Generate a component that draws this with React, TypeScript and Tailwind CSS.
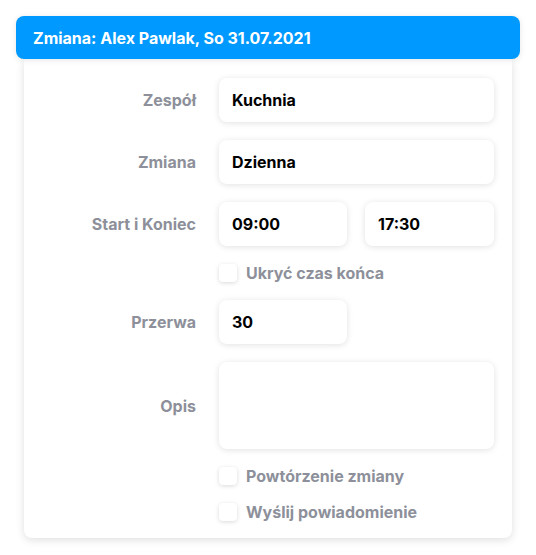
const inputCls =
  "flex h-[44px] items-center rounded-lg bg-white px-[13px] text-[16px] font-bold text-black shadow-[0_1px_6px_rgba(0,0,0,0.12)]";

function Field({ label, children }: { label: string; children: React.ReactNode }) {
  return (
    <div className="flex items-center">
      <div className="w-[172px] shrink-0 text-right text-[16px] font-bold text-[#8d909a]">{label}</div>
      <div className="ml-[23px] flex flex-1 gap-[18px]">{children}</div>
    </div>
  );
}

function Check({ label }: { label: string }) {
  return (
    <div className="flex h-[18px] items-center">
      <div className="w-[172px] shrink-0" />
      <div className="ml-[23px] flex items-center gap-[9px]">
        <span className="h-[18px] w-[18px] rounded-[4px] bg-white shadow-[0_1px_4px_rgba(0,0,0,0.15)]" />
        <span className="text-[16px] font-bold leading-none text-[#8d909a]">{label}</span>
      </div>
    </div>
  );
}

export default function App() {
  return (
    <div
      className="min-h-[555px] bg-white px-[16px] pt-[16px]"
      style={{ fontFamily: "Inter, 'Noto Sans', sans-serif" }}
    >
      <div className="relative z-10 flex h-[43px] items-center rounded-lg bg-[#0099ff] pl-[17px] text-[16px] font-bold text-white shadow-[0_1px_6px_rgba(0,0,0,0.1)]">
        Zmiana: Alex Pawlak, So 31.07.2021
      </div>
      <div className="mx-[8px] flex flex-col gap-[18px] rounded-b-lg bg-white pb-[17px] pr-[18px] pt-[19px] shadow-[0_2px_8px_rgba(0,0,0,0.13)]">
        <Field label="Zespół">
          <div className={`${inputCls} flex-1`}>Kuchnia</div>
        </Field>
        <Field label="Zmiana">
          <div className={`${inputCls} flex-1`}>Dzienna</div>
        </Field>
        <Field label="Start i Koniec">
          <div className={`${inputCls} w-[128px]`}>09:00</div>
          <div className={`${inputCls} w-[129px]`}>17:30</div>
        </Field>
        <Check label="Ukryć czas końca" />
        <Field label="Przerwa">
          <div className={`${inputCls} w-[128px]`}>30</div>
        </Field>
        <Field label="Opis">
          <div className="h-[87px] flex-1 rounded-lg bg-white shadow-[0_1px_6px_rgba(0,0,0,0.12)]" />
        </Field>
        <Check label="Powtórzenie zmiany" />
        <Check label="Wyślij powiadomienie" />
      </div>
    </div>
  );
}
